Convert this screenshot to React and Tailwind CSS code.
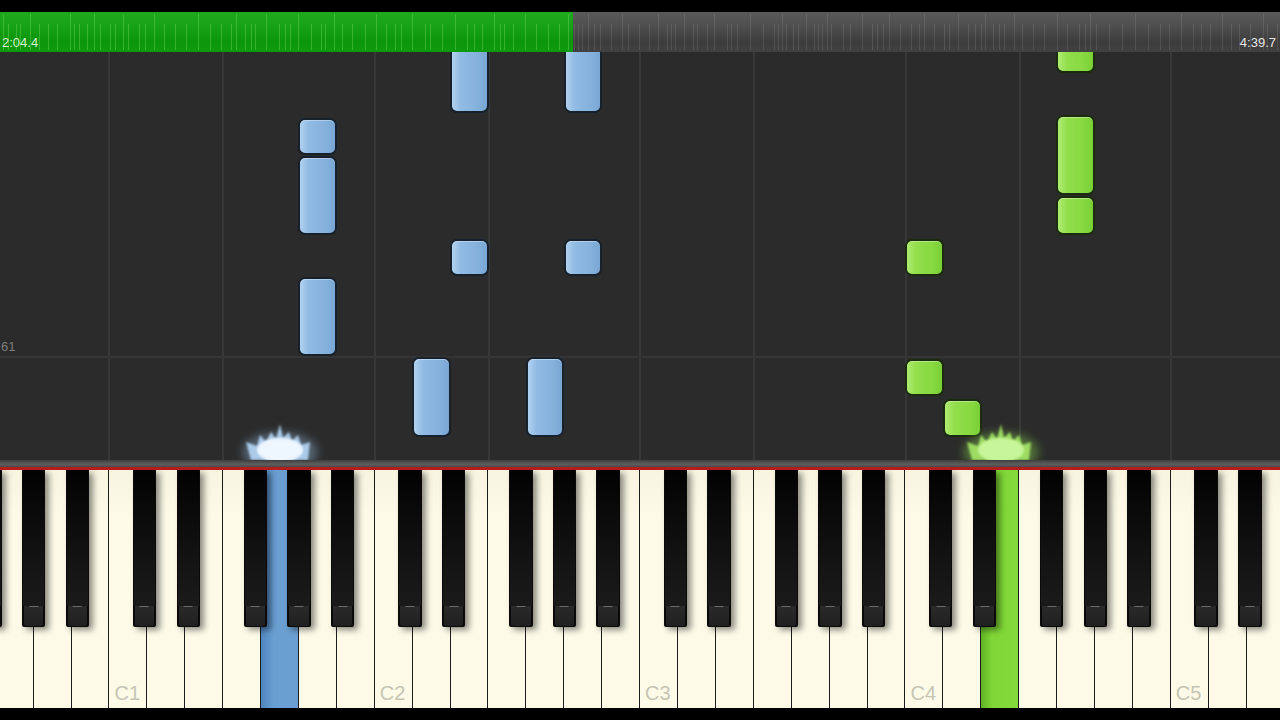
import React from 'react';

// keyboard geometry (white key width and x of the first visible white key, G0)
const W = 37.92;
const X0 = -4.3;
const wx = (i) => X0 + i * W;
const NAMES = ['C', 'D', 'E', 'F', 'G', 'A', 'B'];
const BLACK_OFFSET = { C: -3, D: 3, F: -5.7, G: 0, A: 5.7 };
const WHITE_COUNT = 34;
const AREA_TOP = 52;

const nameOf = (i) => NAMES[(((4 + i) % 7) + 7) % 7];
const octaveOf = (i) => Math.floor((i + 4) / 7);

const PRESSED = { 7: 'blue', 26: 'green' };

// [colour, white key index, top, bottom] in page coordinates
const NOTES = [
  ['blue', 8, 119, 154],
  ['blue', 8, 157, 234],
  ['blue', 8, 278, 355],
  ['blue', 12, 30, 112],
  ['blue', 12, 240, 275],
  ['blue', 15, 30, 112],
  ['blue', 15, 240, 275],
  ['blue', 11, 358, 436],
  ['blue', 14, 358, 436],
  ['green', 24, 240, 275],
  ['green', 24, 360, 395],
  ['green', 25, 400, 436],
  ['green', 28, 20, 72],
  ['green', 28, 116, 194],
  ['green', 28, 197, 234],
];

const GRID_X = [3, 6, 10, 13, 17, 20, 24, 27, 31].map((i) => wx(i));

function ticks() {
  let seed = 11;
  const out = [];
  let x = 3;
  while (x < 1280) {
    seed = (seed * 1103515245 + 12345) % 2147483648;
    out.push(x);
    x += 4 + (Math.floor(seed / 65536) % 10);
  }
  return out;
}

function ProgressBar() {
  const xs = ticks();
  return (
    <div className="relative h-[40px] flex">
      <div className="w-[573px] h-full bg-[linear-gradient(to_bottom,#1fa91f,#17a217_35%,#0c960c_70%,#0e9a0e)]" />
      <div className="flex-1 h-full bg-[linear-gradient(to_bottom,#5a5a5a,#4c4c4c_40%,#3d3d3d_75%,#414141)]" />
      <svg className="absolute inset-0" width="1280" height="40">
        {xs.map((x, k) => (
          <line
            key={k}
            x1={x + 0.5}
            x2={x + 0.5}
            y1={k % 4 === 0 ? 2 : 12}
            y2={38}
            stroke={x < 573 ? 'rgba(150,240,130,0.3)' : 'rgba(255,255,255,0.1)'}
            strokeWidth="1"
          />
        ))}
      </svg>
      <span className="absolute left-[2px] bottom-[3px] text-[13px] leading-none text-[#d6f2cc] font-['Liberation_Sans',sans-serif]">
        2:04.4
      </span>
      <span className="absolute right-[4px] bottom-[3px] text-[13px] leading-none text-[#e6e6e6] font-['Liberation_Sans',sans-serif]">
        4:39.7
      </span>
    </div>
  );
}

function Note({ color, idx, top, bottom }) {
  const blue = color === 'blue';
  return (
    <div
      className={
        'absolute rounded-[7px] border-2 shadow-[inset_0_1px_0_rgba(255,255,255,0.35)] ' +
        (blue
          ? 'border-[#17212c] bg-[linear-gradient(to_right,#b2d2f0,#91bbe4_25%,#84b0dc_75%,#7aa6d4)]'
          : 'border-[#1b2c0e] bg-[linear-gradient(to_right,#b0ec74,#93df4c_25%,#86d840_75%,#79cf36)]')
      }
      style={{ left: wx(idx) - 1, width: W + 1, top: top - AREA_TOP - 1, height: bottom - top + 2 }}
    />
  );
}

function Glow({ x, color }) {
  const blue = color === 'blue';
  const core = blue ? '#eef6ff' : '#c6f59a';
  const mid = blue ? '#b4d6f6' : '#a6e868';
  const halo = blue ? '#8fb3d6' : '#86d24c';
  const id = 'blur' + color;
  return (
    <svg className="absolute bottom-0" width="90" height="40" style={{ left: x - 45 }}>
      <defs>
        <filter id={id} x="-50%" y="-50%" width="200%" height="200%">
          <feGaussianBlur stdDeviation="4" />
        </filter>
        <filter id={id + 's'} x="-50%" y="-50%" width="200%" height="200%">
          <feGaussianBlur stdDeviation="1.2" />
        </filter>
      </defs>
      <ellipse cx="45" cy="32" rx="38" ry="20" fill={halo} opacity="0.4" filter={`url(#${id})`} />
      <path
        d="M16 40 L11 22 L22 26 L25 15 L31 22 L36 12 L41 19 L45 4 L48 18 L54 12 L57 21 L63 15 L66 25 L75 22 L73 40 Z"
        fill={mid}
        opacity="0.9"
        filter={`url(#${id + 's'})`}
      />
      <ellipse cx="45" cy="30" rx="23" ry="12" fill={core} filter={`url(#${id + 's'})`} />
    </svg>
  );
}

function NoteArea() {
  return (
    <div className="relative h-[408px] bg-[#2b2b2b] overflow-hidden">
      {GRID_X.map((x, k) => (
        <div key={k} className="absolute top-0 bottom-0 w-[2px] bg-[#383838]" style={{ left: x - 1 }} />
      ))}
      <div className="absolute left-0 right-0 top-[304px] h-[2px] bg-[#353535]" />
      <span className="absolute left-[1px] top-[288px] text-[13px] leading-none text-[#7c7c7c] font-['Liberation_Sans',sans-serif]">
        61
      </span>
      {NOTES.map(([c, i, t, b], k) => (
        <Note key={k} color={c} idx={i} top={t} bottom={b} />
      ))}
      <Glow x={wx(7) + W / 2} color="blue" />
      <Glow x={wx(26) + W / 2} color="green" />
    </div>
  );
}

function WhiteKey({ i }) {
  const name = nameOf(i);
  const pressed = PRESSED[i];
  let bg = 'bg-[linear-gradient(to_bottom,#f7f5e0,#fdfbe8_20%,#fdfbe8)]';
  if (pressed === 'blue') bg = 'bg-[linear-gradient(to_right,#4f85bd,#6a9fd2_35%,#6b9fd1)]';
  if (pressed === 'green') bg = 'bg-[linear-gradient(to_right,#5fb424,#7fd636_30%,#83da3a)]';
  return (
    <div className={'relative shrink-0 w-[37.92px] h-full border-r-[1.5px] border-[#1c1c1c] ' + bg}>
      {name === 'C' && !pressed && (
        <span className="absolute left-[5px] bottom-[5px] text-[20px] leading-none text-[#c6c5b4] font-['Liberation_Sans',sans-serif]">
          C{octaveOf(i)}
        </span>
      )}
    </div>
  );
}

function BlackKey({ left }) {
  return (
    <div
      className="absolute top-0 h-[157px] w-[23.4px] flex flex-col bg-[#0a0a0a] rounded-b-[2px] shadow-[4px_3px_6px_rgba(0,0,0,0.45)]"
      style={{ left }}
    >
      <div className="flex-1 mx-[1px] bg-[linear-gradient(to_bottom,#020202,#141414_70%,#1a1a1a)]" />
      <div className="relative h-[20px] mx-[2px] mb-[1px] rounded-b-[2px] bg-[linear-gradient(to_bottom,#2a2a2a,#202020)]">
        <div className="absolute left-1/2 -translate-x-1/2 top-0 w-[9px] h-[1px] bg-[#6a6a6a]" />
      </div>
    </div>
  );
}

function Keyboard() {
  const whites = Array.from({ length: WHITE_COUNT }, (_, i) => i);
  const blacks = [];
  for (let i = -1; i < WHITE_COUNT - 1; i++) {
    const off = BLACK_OFFSET[nameOf(i)];
    if (off === undefined) continue;
    blacks.push(wx(i + 1) + off - 11.7);
  }
  return (
    <div className="flex flex-col">
      <div className="h-[7px] bg-[linear-gradient(to_bottom,#3e3e3e,#5e5e5e_60%,#4a4a4a)]" />
      <div className="h-[3px] bg-[#b51d1d]" />
      <div className="relative h-[238px] overflow-hidden">
        <div className="flex h-full ml-[-4.3px]">
          {whites.map((i) => (
            <WhiteKey key={i} i={i} />
          ))}
        </div>
        {blacks.map((l, k) => (
          <BlackKey key={k} left={l} />
        ))}
      </div>
    </div>
  );
}

export default function App() {
  return (
    <div className="w-[1280px] h-[720px] bg-black flex flex-col overflow-hidden">
      <div className="h-[12px] bg-black" />
      <ProgressBar />
      <NoteArea />
      <Keyboard />
      <div className="flex-1 bg-black" />
    </div>
  );
}
